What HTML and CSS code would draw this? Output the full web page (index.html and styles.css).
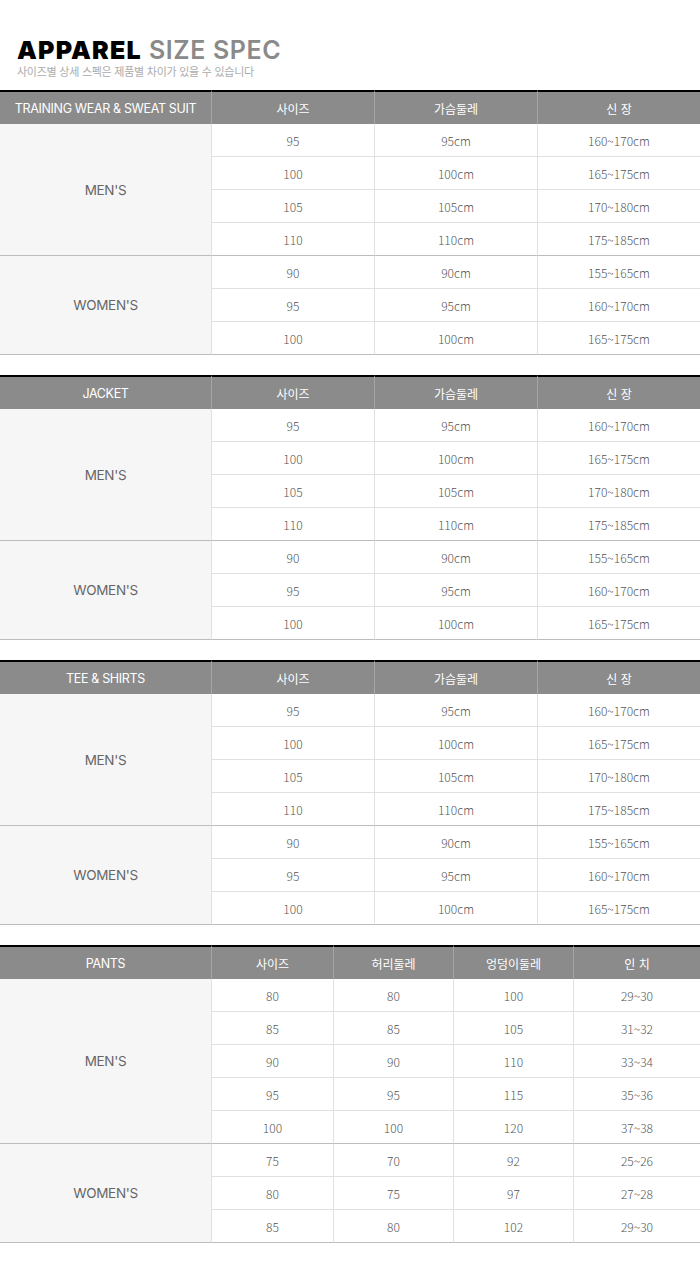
FILE: index.html
```html
<!DOCTYPE html>
<html lang="ko">
<head>
<meta charset="utf-8">
<link rel="stylesheet" href="styles.css">
</head>
<body>
<div class="page">
  <header class="intro">
    <h1 class="title"><span class="strong">APPAREL</span> <span class="light">SIZE SPEC</span></h1>
    <p class="subtitle">사이즈별 상세 스펙은 제품별 차이가 있을 수 있습니다</p>
  </header>

  <table class="spec spec4">
    <colgroup><col class="c-label"><col><col><col></colgroup>
    <thead><tr><th class="en">TRAINING WEAR &amp; SWEAT SUIT</th><th>사이즈</th><th>가슴둘레</th><th>신 장</th></tr></thead>
    <tbody>
      <tr><td class="label" rowspan="4">MEN'S</td><td>95</td><td>95cm</td><td>160~170cm</td></tr>
      <tr><td>100</td><td>100cm</td><td>165~175cm</td></tr>
      <tr><td>105</td><td>105cm</td><td>170~180cm</td></tr>
      <tr class="group-end"><td>110</td><td>110cm</td><td>175~185cm</td></tr>
      <tr><td class="label" rowspan="3">WOMEN'S</td><td>90</td><td>90cm</td><td>155~165cm</td></tr>
      <tr><td>95</td><td>95cm</td><td>160~170cm</td></tr>
      <tr class="group-end"><td>100</td><td>100cm</td><td>165~175cm</td></tr>
    </tbody>
  </table>

  <table class="spec spec4">
    <colgroup><col class="c-label"><col><col><col></colgroup>
    <thead><tr><th class="en">JACKET</th><th>사이즈</th><th>가슴둘레</th><th>신 장</th></tr></thead>
    <tbody>
      <tr><td class="label" rowspan="4">MEN'S</td><td>95</td><td>95cm</td><td>160~170cm</td></tr>
      <tr><td>100</td><td>100cm</td><td>165~175cm</td></tr>
      <tr><td>105</td><td>105cm</td><td>170~180cm</td></tr>
      <tr class="group-end"><td>110</td><td>110cm</td><td>175~185cm</td></tr>
      <tr><td class="label" rowspan="3">WOMEN'S</td><td>90</td><td>90cm</td><td>155~165cm</td></tr>
      <tr><td>95</td><td>95cm</td><td>160~170cm</td></tr>
      <tr class="group-end"><td>100</td><td>100cm</td><td>165~175cm</td></tr>
    </tbody>
  </table>

  <table class="spec spec4">
    <colgroup><col class="c-label"><col><col><col></colgroup>
    <thead><tr><th class="en">TEE &amp; SHIRTS</th><th>사이즈</th><th>가슴둘레</th><th>신 장</th></tr></thead>
    <tbody>
      <tr><td class="label" rowspan="4">MEN'S</td><td>95</td><td>95cm</td><td>160~170cm</td></tr>
      <tr><td>100</td><td>100cm</td><td>165~175cm</td></tr>
      <tr><td>105</td><td>105cm</td><td>170~180cm</td></tr>
      <tr class="group-end"><td>110</td><td>110cm</td><td>175~185cm</td></tr>
      <tr><td class="label" rowspan="3">WOMEN'S</td><td>90</td><td>90cm</td><td>155~165cm</td></tr>
      <tr><td>95</td><td>95cm</td><td>160~170cm</td></tr>
      <tr class="group-end"><td>100</td><td>100cm</td><td>165~175cm</td></tr>
    </tbody>
  </table>

  <table class="spec spec5">
    <colgroup><col class="c-label"><col class="p1"><col class="p2"><col class="p3"><col></colgroup>
    <thead><tr><th class="en">PANTS</th><th>사이즈</th><th>허리둘레</th><th>엉덩이둘레</th><th>인 치</th></tr></thead>
    <tbody>
      <tr><td class="label" rowspan="5">MEN'S</td><td>80</td><td>80</td><td>100</td><td>29~30</td></tr>
      <tr><td>85</td><td>85</td><td>105</td><td>31~32</td></tr>
      <tr><td>90</td><td>90</td><td>110</td><td>33~34</td></tr>
      <tr><td>95</td><td>95</td><td>115</td><td>35~36</td></tr>
      <tr class="group-end"><td>100</td><td>100</td><td>120</td><td>37~38</td></tr>
      <tr><td class="label" rowspan="3">WOMEN'S</td><td>75</td><td>70</td><td>92</td><td>25~26</td></tr>
      <tr><td>80</td><td>75</td><td>97</td><td>27~28</td></tr>
      <tr class="group-end"><td>85</td><td>80</td><td>102</td><td>29~30</td></tr>
    </tbody>
  </table>
</div>
</body>
</html>
```

FILE: styles.css
```css
* { box-sizing: border-box; }
html, body { margin: 0; padding: 0; background: #fff; }
body { font-family: "Noto Sans CJK KR", "Noto Sans", sans-serif; }

.page { width: 700px; }

.intro { padding: 36px 0 0 17px; height: 90px; }
.title {
  margin: 0;
  height: 28px;
  font-family: "Inter", "Liberation Sans", sans-serif;
  font-size: 25px;
  line-height: 28px;
  letter-spacing: 1.2px;
  white-space: nowrap;
}
.title .strong { font-weight: 900; color: #000; }
.title .light { font-weight: 600; color: #8a8a8a; letter-spacing: 0.6px; }
.subtitle {
  margin: 0;
  height: 14px;
  font-size: 11px;
  line-height: 14px;
  letter-spacing: -0.25px;
  color: #ababab;
}

.spec {
  width: 700px;
  table-layout: fixed;
  border-collapse: separate;
  border-spacing: 0;
  margin-bottom: 20px;
}
.spec col.c-label { width: 211px; }
.spec5 col.p1 { width: 122px; }
.spec5 col.p2 { width: 120px; }
.spec5 col.p3 { width: 120px; }

.spec th {
  height: 34px;
  padding: 0;
  background: #8b8b8b;
  color: #fff;
  font-weight: 400;
  font-size: 12px;
  text-align: center;
  vertical-align: middle;
  border-top: 2px solid #000;
  border-left: 1px solid #a6a6a6;
}
.spec th:first-child { border-left: 0; }
.spec th.en {
  font-family: "Inter", "Liberation Sans", sans-serif;
  font-size: 12.5px;
  letter-spacing: -0.35px;
}

.spec td {
  height: 33px;
  padding: 0;
  text-align: center;
  vertical-align: middle;
  font-size: 12px;
  font-weight: 300;
  color: #555;
  border-bottom: 1px solid #e0e0e0;
  border-left: 1px solid #e0e0e0;
}
.spec td.label {
  background: #f6f6f6;
  border-left: 0;
  border-bottom: 1px solid #bcbcbc;
  font-family: "Inter", "Liberation Sans", sans-serif;
  font-weight: 400;
  font-size: 13.5px;
  letter-spacing: -0.3px;
  color: #666;
}
.spec tr.group-end td { border-bottom: 1px solid #bcbcbc; }
```
